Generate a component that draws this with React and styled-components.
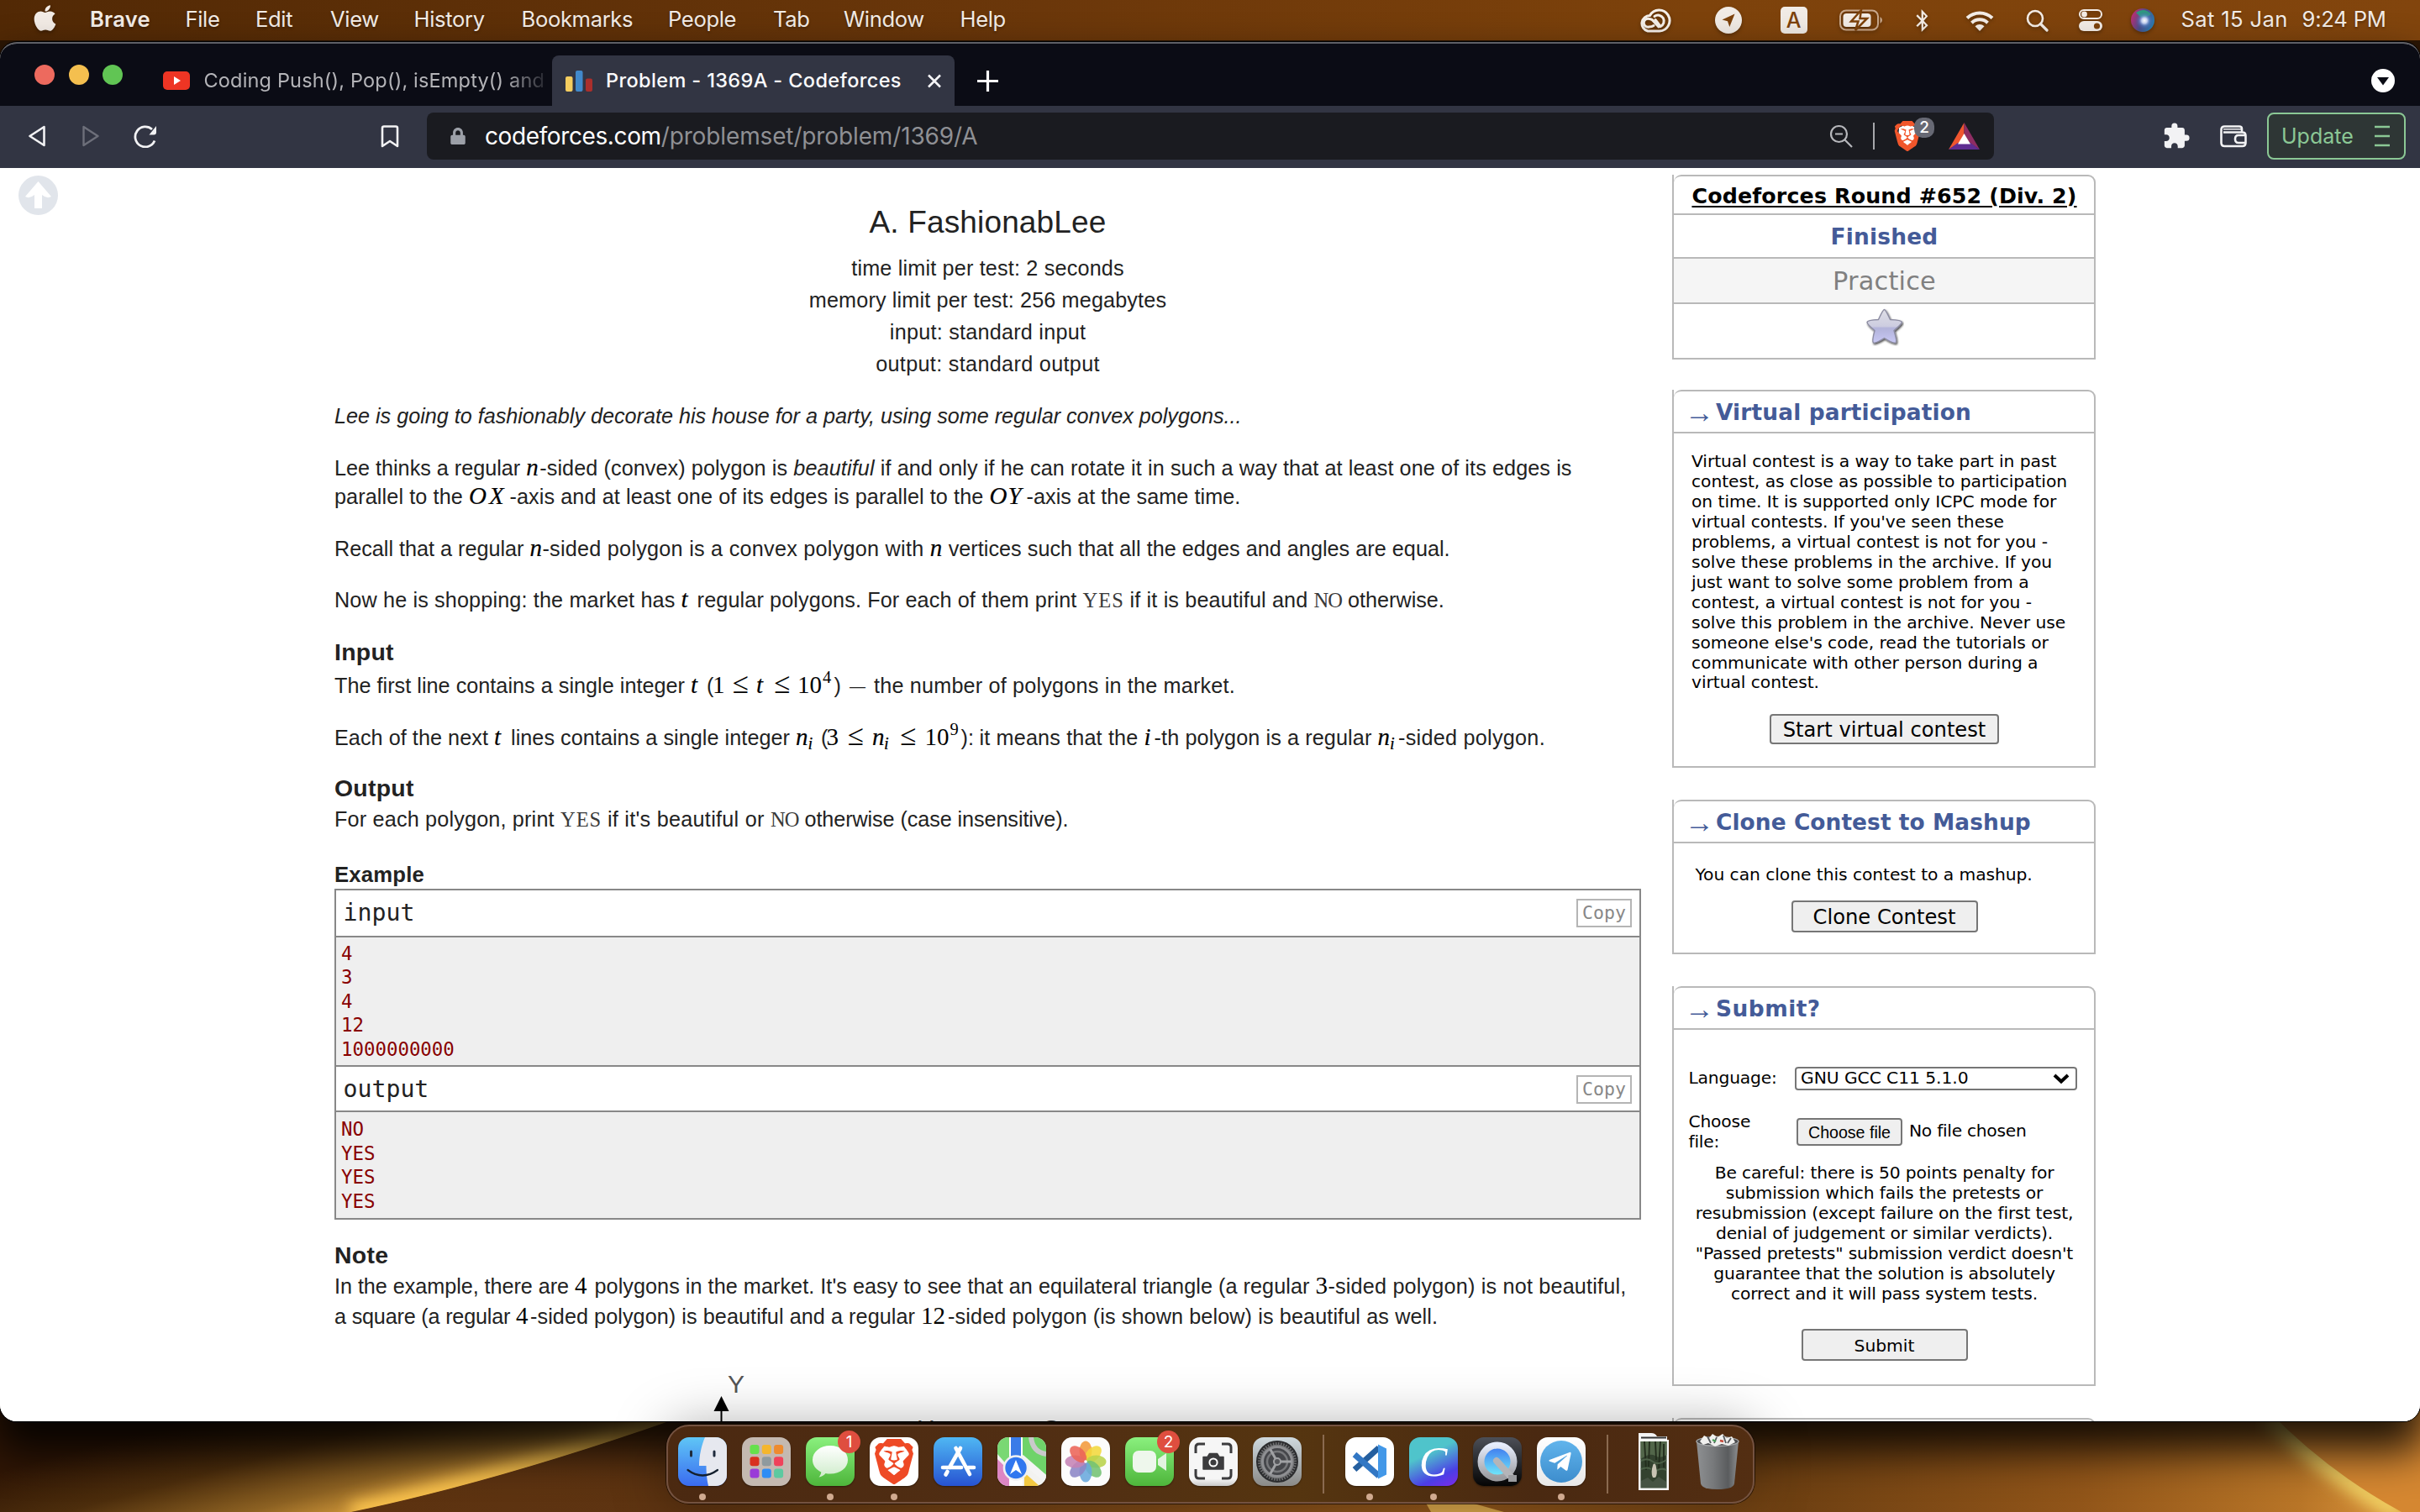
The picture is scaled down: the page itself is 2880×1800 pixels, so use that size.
import React from "react";
import styled, { createGlobalStyle, css } from "styled-components";
import { FaApple, FaTelegramPlane, FaBluetoothB, FaLock } from "react-icons/fa";
import { MdExtension } from "react-icons/md";
import { SiBrave } from "react-icons/si";

const SANS = `"Liberation Sans", Arial, sans-serif`;
const SERIF = `"Liberation Serif", "Times New Roman", serif`;
const VERDANA = `"DejaVu Sans", Verdana, sans-serif`;
const MONO = `"DejaVu Sans Mono", monospace`;
const UI = `Inter, sans-serif`;
const LINE = "#b9b9b9";
const BLUE = "#445b98";

const GlobalStyle = createGlobalStyle`
  * { box-sizing: border-box; }
  html, body { margin: 0; padding: 0; background: #1b0d03; }
  svg { display: block; flex: none; }
`;

/* ---------- desktop ---------- */

const Desktop = styled.div`
  position: relative;
  width: 2880px;
  height: 1800px;
  overflow: hidden;
  background: #2c1604;
`;

const WallpaperLayer = styled.svg`
  position: absolute;
  left: 0;
  bottom: 0;
`;

const MenuBar = styled.header`
  position: relative;
  display: flex;
  align-items: center;
  height: 48px;
  color: #f3ece6;
  background: linear-gradient(90deg, #522905 0%, #6b370a 43%, #7d420b 70%, #82450d 100%);
  font: 400 25.6px/45px ${UI};
  svg { filter: drop-shadow(0 2px 2px rgba(0, 0, 0, 0.3)); }
`;

const AppleSlot = styled.div`
  width: 107px;
  padding: 0 0 5px 36px;
`;

const MenuItem = styled.span`
  width: ${(p) => p.$w}px;
  padding-bottom: 3px;
  letter-spacing: ${(p) => p.$ls ?? -0.35}px;
  font-weight: ${(p) => (p.$strong ? 600 : 400)};
  text-shadow: 0 2px 3px rgba(0, 0, 0, 0.3);
  white-space: pre;
`;

const StatusItem = styled.span`
  display: flex;
  flex: none;
  align-items: center;
  justify-content: center;
  width: ${(p) => p.$w}px;
  margin-left: ${(p) => p.$gap}px;
`;

const Clock = styled(MenuItem)`
  margin-left: ${(p) => p.$gap}px;
`;

const InputBadge = styled.span`
  width: 32px;
  height: 32px;
  border-radius: 5px;
  background: #f1ebe5;
  color: #7d420b;
  text-align: center;
  font: 500 25px/32px ${UI};
`;

/* ---------- browser window ---------- */

const BrowserWindow = styled.main`
  position: relative;
  display: flex;
  flex-direction: column;
  height: 1642px;
  margin-top: 2px;
  border-top: 2px solid #5e5f66;
  border-radius: 20px;
  overflow: hidden;
  background: #fff;
`;

const WindowShade = styled.div`
  position: relative;
  border-radius: 20px;
  box-shadow: 0 0 0 1px #000, 0 30px 50px 6px rgba(0, 0, 0, 0.85);
`;

const TabStrip = styled.div`
  display: flex;
  align-items: center;
  height: 74px;
  padding: 0 30px 0 41px;
  background: #0b0c15;
`;

const Lights = styled.div`
  display: flex;
  gap: 16.5px;
  width: 137px;
`;

const Light = styled.i`
  width: 24px;
  height: 24px;
  border-radius: 50%;
  background: ${(p) => p.$c};
`;

const Tab = styled.div`
  display: flex;
  align-items: center;
  align-self: flex-end;
  gap: 16.5px;
  width: ${(p) => p.$w}px;
  height: 60px;
  padding-left: 16px;
  border-radius: 8px 8px 0 0;
  color: ${(p) => (p.$active ? "#fbfbfd" : "#b4b4b8")};
  background: ${(p) => (p.$active ? "#323543" : "transparent")};
  font: ${(p) => (p.$active ? 500 : 400)} 23.5px/60px ${UI};
`;

const TabTitle = styled.span`
  width: ${(p) => p.$w}px;
  overflow: hidden;
  white-space: nowrap;
  letter-spacing: ${(p) => p.$ls}px;
  ${(p) => p.$fade && css`mask-image: linear-gradient(90deg, #000 88%, transparent 102%);`}
`;

const StripIcon = styled.span`
  display: flex;
  align-self: flex-end;
  align-items: center;
  height: 60px;
  margin-left: ${(p) => p.$gap};
`;

const Toolbar = styled.div`
  display: flex;
  align-items: center;
  height: 74px;
  padding-bottom: 2px;
  background: #323543;
`;

const Tool = styled.span`
  display: flex;
  width: ${(p) => p.$w}px;
  margin-left: ${(p) => p.$gap}px;
  color: ${(p) => p.$c || "#f2f2f4"};
`;

const AddressBar = styled.div`
  display: flex;
  align-items: center;
  width: 1865px;
  height: 56px;
  margin-left: 33px;
  padding: 0 17px 0 27px;
  border-radius: 8px;
  background: #1a1b20;
  color: #9ca0a8;
  font: 400 28px/56px ${UI};
`;

const Host = styled.span`
  margin-left: 22px;
  color: #fff;
  letter-spacing: -0.39px;
`;

const Path = styled.span`
  flex: 1;
  color: #8f9094;
  letter-spacing: -0.13px;
`;

const BarRule = styled.i`
  width: 2px;
  height: 32px;
  margin: 0 23px 0 24px;
  background: #a6a7ab;
`;

const Shield = styled.span`
  position: relative;
  width: 65px;
  color: #f1562b;
`;

const LionMark = styled(SiBrave)`
  margin: -36px 0 0 -2px;
`;

const ShieldCount = styled.b`
  position: absolute;
  left: 24px;
  top: -4px;
  width: 24px;
  height: 24px;
  border-radius: 10px;
  background: #676974;
  color: #fff;
  text-align: center;
  font: 500 19px/24px ${UI};
`;

const UpdateButton = styled.button`
  display: flex;
  align-items: center;
  justify-content: space-between;
  width: 165px;
  height: 56px;
  margin-left: 24px;
  padding: 0 17px 0 15px;
  border: 2px solid #8bc895;
  border-radius: 8px;
  background: #2e3635;
  color: #8bc895;
  font: 400 25px/50px ${UI};
`;

/* ---------- page ---------- */

const Page = styled.div`
  display: flex;
  align-items: flex-start;
  flex: 1;
  overflow: hidden;
  background: #fff;
`;

const Gutter = styled.div`
  width: 398px;
  padding: 9px 0 0 22px;
`;

const Article = styled.article`
  width: 1555px;
  margin-right: 37px;
  padding-top: 45px;
  color: #222;
  font: 400 25.2px/34px ${SANS};
`;

const Title = styled.h1`
  margin: 0 0 15px;
  text-align: center;
  font: 400 37px/40px ${SANS};
  letter-spacing: 0.15px;
`;

const Limit = styled.div`
  text-align: center;
  line-height: 38px;
  letter-spacing: ${(p) => p.$ls}px;
`;

const Line = styled.div`
  height: 34px;
  margin-top: ${(p) => p.$gap || 0}px;
  white-space: pre;
`;

const T = styled.span`
  letter-spacing: ${(p) => p.$ls || 0}px;
  font-style: ${(p) => (p.$it ? "italic" : "normal")};
`;

const Cell = styled.span`
  display: inline-block;
  width: ${(p) => p.$w}px;
  line-height: 0;
`;

const Dash = styled(Cell)`
  font-size: 19px;
  vertical-align: 2px;
`;

const M = styled(Cell)`
  color: #000;
  font-family: ${SERIF};
  font-size: ${(p) => p.$size || 29}px;
  font-style: ${(p) => (p.$up ? "normal" : "italic")};
  letter-spacing: ${(p) => p.$ls || 0}px;
  text-align: ${(p) => (p.$mid ? "center" : "left")};
  vertical-align: ${(p) => p.$lift || 0}px;
  -webkit-text-stroke: ${(p) => (p.$up ? 0 : 0.2)}px #000;
`;

const TT = styled(Cell)`
  color: #3a3a3a;
  font-family: ${SERIF};
  font-size: 24.5px;
  letter-spacing: ${(p) => p.$ls || 0}px;
`;

const Heading = styled.h2`
  margin: ${(p) => p.$gap}px 0 ${(p) => p.$after || 0}px;
  font: 700 28.4px/40px ${SANS};
  letter-spacing: 0.28px;
`;

const SubHeading = styled.h3`
  margin: 32px 0 0;
  font: 700 25.7px/34px ${SANS};
  letter-spacing: 0.19px;
`;

const Samples = styled.section`
  border: 2px solid #888;
`;

const SampleHead = styled.div`
  display: flex;
  align-items: center;
  justify-content: space-between;
  height: ${(p) => p.$h}px;
  padding: ${(p) => (p.$second ? 1 : 0)}px 9px 0 8.5px;
  border-bottom: 2px solid #888;
  border-top: ${(p) => (p.$second ? "2px solid #888" : "0")};
  font: 400 28.2px/40px ${MONO};
`;

const CopyButton = styled.button`
  width: 66px;
  height: 34px;
  padding: 0;
  border: 2px solid #b5b5b5;
  background: #fff;
  color: #888;
  font: 400 21.5px/28px ${MONO};
`;

const Pre = styled.pre`
  height: ${(p) => p.$h}px;
  margin: 0;
  padding: ${(p) => p.$top}px 0 0 6px;
  background: #efefef;
  color: #880000;
  font: 400 22.4px/28.5px ${MONO};
`;

const Figure = styled.svg`
  margin-top: 36px;
`;

/* ---------- sidebar ---------- */

const Sidebar = styled.aside`
  display: flex;
  flex-direction: column;
  gap: 38px;
  width: 504px;
  padding-top: 8px;
  color: #000;
  font: 400 20.3px/23.95px ${VERDANA};
  letter-spacing: -0.07px;
`;

const Card = styled.section`
  display: flex;
  flex: none;
  flex-direction: column;
  height: ${(p) => p.$h}px;
  margin-bottom: ${(p) => p.$pull || 0}px;
  border-left: 2px solid ${LINE};
  border-bottom: 2px solid ${LINE};
`;

const CardHead = styled.header`
  display: flex;
  align-items: center;
  height: 52px;
  padding: 2px 0 0 15px;
  border: 2px solid ${LINE};
  border-left: 0;
  border-radius: 9px 9px 0 0;
  color: ${BLUE};
  font: 700 26.4px/44px ${VERDANA};
  letter-spacing: ${(p) => p.$ls ?? 0.2}px;
`;

const Arrow = styled.span`
  width: 36px;
  margin-left: -2px;
  margin-right: 1px;
  font: 400 35px/40px ${SANS};
`;

const CardBody = styled.div`
  flex: 1;
  padding: ${(p) => p.$pad};
  border-right: 2px solid ${LINE};
`;

const RoundName = styled(CardHead)`
  justify-content: center;
  height: 48px;
  padding: 3px 0 0 1px;
  color: #000;
  font-size: 25.3px;
  letter-spacing: 0.14px;
  text-decoration: underline;
  text-decoration-thickness: 2px;
  text-underline-offset: 3px;
`;

const RoundRow = styled.div`
  display: flex;
  align-items: center;
  justify-content: center;
  height: ${(p) => p.$h}px;
  padding: 2px 0 0 1px;
  border-right: 2px solid ${LINE};
  border-bottom: 2px solid ${LINE};
  background: ${(p) => (p.$shaded ? "#f5f5f5" : "#fff")};
  color: ${(p) => (p.$shaded ? "#808080" : BLUE)};
  font: ${(p) => (p.$shaded ? "400 30.4px" : "700 26.4px")} / 40px ${VERDANA};
  letter-spacing: 0.2px;
`;

const StarRow = styled(CardBody)`
  display: flex;
  justify-content: center;
`;

const Text = styled.p`
  margin: 0;
  white-space: pre;
  text-align: ${(p) => (p.$center ? "center" : "left")};
  letter-spacing: ${(p) => (p.$center ? "-0.15px" : "inherit")};
`;

const FullWidth = styled.div`
  margin-left: -${(p) => p.$inset}px;
  padding-left: 1px;
`;

const Button = styled.button`
  display: block;
  width: ${(p) => p.$w}px;
  height: ${(p) => p.$h}px;
  margin: ${(p) => p.$gap}px auto 0;
  padding: 2px 0 0;
  border: 2px solid #767676;
  border-radius: 4px;
  background: #efefef;
  color: #000;
  font: 400 ${(p) => p.$size || 24.2}px/30px ${VERDANA};
`;

const FormRow = styled.div`
  display: flex;
  align-items: center;
  height: ${(p) => p.$h}px;
  margin-bottom: ${(p) => p.$after}px;
`;

const Label = styled.label`
  width: ${(p) => p.$w}px;
  letter-spacing: -0.2px;
`;

const Hint = styled.span`
  padding-bottom: 2px;
  letter-spacing: -0.3px;
`;

const SelectBox = styled.div`
  display: flex;
  align-items: center;
  justify-content: space-between;
  width: 336px;
  height: 28px;
  padding: 0 7px 0 5px;
  border: 2px solid #767676;
  border-radius: 4px;
`;

const FileButton = styled.button`
  width: 126px;
  height: 33px;
  margin-right: 8px;
  padding: 0;
  border: 2px solid #767676;
  border-radius: 4px;
  background: #efefef;
  color: #000;
  font: 400 19.6px/28px ${SANS};
`;

/* ---------- dock ---------- */

const DockBar = styled.nav`
  position: absolute;
  left: 793px;
  top: 1696px;
  display: flex;
  gap: 18px;
  width: 1295px;
  height: 94px;
  padding: 13px 0 0 12px;
  border: 2px solid #745240;
  border-radius: 27px;
  background: linear-gradient(90deg, #4b2911 0%, #512e13 35%, #553510 58%, #4a2911 80%, #532e12 100%);
  box-shadow: 0 0 0 1px rgba(20, 8, 0, 0.7), 0 2px 64px rgba(0, 0, 0, 0.34);
`;

const DockItem = styled.div`
  position: relative;
  display: flex;
  flex-direction: column;
  align-items: center;
  width: 58px;
`;

const TallItem = styled(DockItem)`
  margin-top: ${(p) => p.$lift}px;
`;

const Tile = styled.div`
  display: flex;
  align-items: center;
  justify-content: center;
  flex: none;
  width: 58px;
  height: 58px;
  overflow: hidden;
  border-radius: 13px;
  background: ${(p) => p.$bg};
  box-shadow: 0 1px 2px rgba(0, 0, 0, 0.4);
`;

const RunningDot = styled.i`
  width: 8px;
  height: 8px;
  margin-top: 9px;
  border-radius: 50%;
  background: #d0aa90;
`;

const Badge = styled.b`
  position: absolute;
  right: -7px;
  top: -8px;
  width: 27px;
  height: 27px;
  border-radius: 50%;
  background: #df4e3f;
  color: #fff;
  text-align: center;
  font: 400 19px/27px ${UI};
`;

const DockRule = styled.i`
  flex: none;
  width: 2px;
  height: 70px;
  margin: -3px 7px 0;
  background: #8a6a50;
`;

const petals = ["#f39a3b", "#f3d83c", "#b9d34b", "#73c173", "#69a9dd", "#8c86c6", "#c583b5", "#ec6458"];
const pads = ["#66e04c", "#f5b62d", "#ee8b2f", "#d9301f", "#8f9a9e", "#f0425a", "#9a3cd8", "#2f8df5", "#5cc9a0"];

function Wallpaper() {
  return (
    <WallpaperLayer width="2880" height="120" viewBox="0 1680 2880 120">
      <defs>
        <linearGradient id="base" x1="0" x2="1">
          <stop offset="0" stopColor="#5a300f" />
          <stop offset=".28" stopColor="#5e3411" />
          <stop offset=".6" stopColor="#94581b" />
          <stop offset=".74" stopColor="#6e4012" />
          <stop offset=".86" stopColor="#915519" />
          <stop offset=".95" stopColor="#b87527" />
          <stop offset="1" stopColor="#e09a40" />
        </linearGradient>
        <linearGradient id="left" gradientUnits="userSpaceOnUse" x1="590" y1="1762" x2="545" y2="1600">
          <stop offset="0" stopColor="#d79d3c" />
          <stop offset=".25" stopColor="#8c6122" />
          <stop offset=".6" stopColor="#4c2d0c" />
          <stop offset="1" stopColor="#301605" />
        </linearGradient>
        <filter id="soft" x="-10%" y="-50%" width="120%" height="200%">
          <feGaussianBlur stdDeviation="9" />
        </filter>
        <clipPath id="dune"><path d="M0 1680H830Q600 1762 418 1800H0Z" /></clipPath>
        <clipPath id="slope"><path d="M2400 1680H2700Q2770 1752 2858 1800H2400Z" /></clipPath>
      </defs>
      <rect y="1680" width="2880" height="120" fill="url(#base)" />
      <g clipPath="url(#dune)">
        <path d="M0 1680H830Q600 1762 418 1800H0Z" fill="url(#left)" />
        <path d="M830 1680Q600 1762 418 1800" fill="none" stroke="#ffc850" strokeWidth="20" filter="url(#soft)" />
      </g>
      <path d="M2700 1680Q2770 1752 2858 1800H2880V1680Z" fill="#d58731" />
      <g clipPath="url(#slope)">
        <path d="M2700 1680Q2770 1752 2858 1800" fill="none" stroke="#f0cf62" strokeWidth="26" filter="url(#soft)" />
      </g>
      <path d="M1695 1786L1703 1800H1790L1740 1786Z" fill="#d9a64a" />
    </WallpaperLayer>
  );
}

const CreativeCloud = () => (
  <svg width="40" height="29" viewBox="0 0 40 29" fill="none" stroke="#f6f0ea" strokeWidth="3">
    <path d="M12 27H26A12.500 12.500 0 1 0 14.500 8.500A9.400 9.400 0 0 0 12 27Z" />
    <path d="M19 20.500Q17 22 13.500 22A5 5 0 1 1 14 12.500Q17 12.500 19.500 16L25 22" strokeLinecap="round" />
    <path d="M20 9.500A7 7 0 1 1 27 21.500L21 13.500" strokeLinecap="round" />
  </svg>
);

const Battery = () => (
  <svg width="51" height="26" viewBox="0 0 51 26">
    <rect x="1" y="1.500" width="45" height="23" rx="7" fill="none" stroke="#c9a88c" strokeWidth="2" />
    <path d="M48.500 9v8q2.500-1.500 2.500-4t-2.500-4" fill="#c9a88c" />
    <rect x="4.500" y="5" width="33" height="16" rx="4" fill="#f3ece6" />
    <path d="M26 1L14 14.500h8.500L19 25 33 11h-8.500z" fill="#f3ece6" stroke="#7d420b" strokeWidth="2.500" />
  </svg>
);

const Wifi = () => (
  <svg width="34" height="25" viewBox="0 0 34 25" fill="none" stroke="#f3ece6" strokeWidth="4">
    <path d="M2 9.500A21.500 21.500 0 0 1 32 9.500" />
    <path d="M7.500 15.200A13.600 13.600 0 0 1 26.500 15.200" />
    <path d="M17 25l-5.500-5.700a8 8 0 0 1 11 0z" fill="#f3ece6" stroke="none" />
  </svg>
);

const Magnifier = () => (
  <svg width="27" height="27" viewBox="0 0 27 27" fill="none" stroke="#f3ece6" strokeLinecap="round">
    <circle cx="11" cy="11" r="9" strokeWidth="2.600" />
    <path d="M17.500 17.500L25 25" strokeWidth="3.200" />
  </svg>
);

const ControlCentre = () => (
  <svg width="28" height="26" viewBox="0 0 28 26">
    <rect x="1" y="1" width="26" height="10" rx="5" fill="none" stroke="#f3ece6" strokeWidth="2" />
    <circle cx="6.500" cy="6" r="3.400" fill="#f3ece6" />
    <rect y="14" width="28" height="12" rx="6" fill="#f3ece6" />
    <circle cx="21.500" cy="20" r="3.600" fill="#7d420b" />
  </svg>
);

const Siri = () => (
  <svg width="28" height="28" viewBox="0 0 28 28">
    <defs>
      <radialGradient id="siri" cx=".58" cy=".52" r=".42">
        <stop offset="0" stopColor="#fff" />
        <stop offset=".3" stopColor="#c5d2f2" />
        <stop offset=".6" stopColor="#5f86d0" stopOpacity=".5" />
        <stop offset="1" stopColor="#4a55a0" stopOpacity="0" />
      </radialGradient>
      <linearGradient id="siriRim" x1="0" y1=".3" x2="1" y2=".7">
        <stop offset="0" stopColor="#c22c72" />
        <stop offset=".5" stopColor="#4a4f8c" />
        <stop offset="1" stopColor="#2682b4" />
      </linearGradient>
    </defs>
    <circle cx="14" cy="14" r="14" fill="url(#siriRim)" />
    <path d="M6 5Q16-2 24 7Q18 12 12 11Z" fill="#2d9a80" />
    <circle cx="14" cy="14" r="13" fill="url(#siri)" />
  </svg>
);

const menus = [["File", 83.5], ["Edit", 89], ["View", 99.5], ["History", 128], ["Bookmarks", 174.5], ["People", 125], ["Tab", 84], ["Window", 138.5], ["Help", 60]];

function TopBar() {
  return (
    <MenuBar>
      <AppleSlot><FaApple size={35} /></AppleSlot>
      <MenuItem $w={113.5} $strong $ls={0.2}>Brave</MenuItem>
      {menus.map(([label, w]) => <MenuItem key={label} $w={w}>{label}</MenuItem>)}
      <StatusItem $w={40} $gap={746}><CreativeCloud /></StatusItem>
      <StatusItem $w={32} $gap={52}>
        <svg width="32" height="32" viewBox="0 0 32 32">
          <circle cx="16" cy="16" r="16" fill="#f1ebe5" />
          <path d="M23.500 8.500L8.500 15.500l6.500 1.800 2.300 6.700z" fill="#7d420b" />
        </svg>
      </StatusItem>
      <StatusItem $w={32} $gap={46}><InputBadge>A</InputBadge></StatusItem>
      <StatusItem $w={51} $gap={38}><Battery /></StatusItem>
      <StatusItem $w={18} $gap={39}><FaBluetoothB size={27} /></StatusItem>
      <StatusItem $w={34} $gap={42}><Wifi /></StatusItem>
      <StatusItem $w={27} $gap={38}><Magnifier /></StatusItem>
      <StatusItem $w={28} $gap={36}><ControlCentre /></StatusItem>
      <StatusItem $w={28} $gap={34}><Siri /></StatusItem>
      <Clock $w={144} $gap={32} $ls={0.35}>Sat 15 Jan</Clock>
      <MenuItem $w={105} $ls={-0.2}>9:24 PM</MenuItem>
    </MenuBar>
  );
}

function Chrome() {
  return (
    <>
      <TabStrip>
        <Lights><Light $c="#ed6a5e" /><Light $c="#f4bf4f" /><Light $c="#61c554" /></Lights>
        <Tab $w={478.500}>
          <svg width="32" height="22" viewBox="0 0 32 22">
            <rect width="32" height="22" rx="5" fill="#ee3524" />
            <path d="M13 6l8 5-8 5z" fill="#fff" />
          </svg>
          <TabTitle $w={406} $ls={0.17} $fade>Coding Push(), Pop(), isEmpty() and</TabTitle>
        </Tab>
        <Tab $w={479} $active>
          <svg width="32" height="25" viewBox="0 0 32 25">
            <rect y="7" width="8.500" height="18" rx="2" fill="#f5cd5f" />
            <rect x="12" width="8.500" height="25" rx="2" fill="#4189cb" />
            <rect x="24" y="9.500" width="8" height="15.500" rx="2" fill="#ab2f2c" />
          </svg>
          <TabTitle $w={365} $ls={0.37}>Problem - 1369A - Codeforces</TabTitle>
          <svg width="18" height="17" viewBox="0 0 18 17" stroke="#f4f4f6" strokeWidth="2.600"><path d="M2 1.500l14 14M16 1.500l-14 14" /></svg>
        </Tab>
        <StripIcon $gap="27px">
          <svg width="25" height="25" viewBox="0 0 25 25" stroke="#fff" strokeWidth="3.200"><path d="M12.500 0v25M0 12.500h25" /></svg>
        </StripIcon>
        <StripIcon $gap="auto">
          <svg width="28" height="28" viewBox="0 0 28 28"><circle cx="14" cy="14" r="14" fill="#fff" /><path d="M7 10h14l-7 9.500z" fill="#0b0c15" /></svg>
        </StripIcon>
      </TabStrip>
      <Toolbar>
        <Tool $w={20} $gap={34}>
          <svg width="20" height="26" viewBox="0 0 20 26" fill="none" stroke="currentColor" strokeWidth="2.600" strokeLinejoin="round"><path d="M18.500 2v22L1.500 13z" /></svg>
        </Tool>
        <Tool $w={20} $gap={44} $c="#6d6f7a">
          <svg width="20" height="26" viewBox="0 0 20 26" fill="none" stroke="currentColor" strokeWidth="2.400" strokeLinejoin="round"><path d="M1.500 2v22L18.500 13z" /></svg>
        </Tool>
        <Tool $w={28} $gap={41}>
          <svg width="28" height="27" viewBox="0 0 28 27" fill="none" stroke="currentColor" strokeWidth="2.800">
            <path d="M25 18.500A12 12 0 1 1 22 5" />
            <path d="M27 1v7.500a3 3 0 0 1-3 3h-5.500z" fill="currentColor" stroke="none" />
          </svg>
        </Tool>
        <Tool $w={22} $gap={266}>
          <svg width="22" height="27" viewBox="0 0 22 27" fill="none" stroke="currentColor" strokeWidth="2.600" strokeLinejoin="round"><path d="M2 3.500q0-2 2-2h14q2 0 2 2V25l-9-6-9 6z" /></svg>
        </Tool>
        <AddressBar>
          <FaLock size={20} />
          <Host>codeforces.com</Host>
          <Path>/problemset/problem/1369/A</Path>
          <svg width="28" height="28" viewBox="0 0 28 28" fill="none" stroke="#b6b7bb" strokeWidth="2.200"><circle cx="11.500" cy="11.500" r="9.500" /><path d="M18.500 18.500L27 27M7 11.500h9" /></svg>
          <BarRule />
          <Shield>
            <svg width="32" height="36" viewBox="0 0 32 36"><path d="M6 8L12 5h8l6 3 1 14-11 11L5 22z" fill="#fff" /></svg>
            <LionMark size={36} />
            <ShieldCount>2</ShieldCount>
          </Shield>
          <svg width="37" height="32" viewBox="0 0 37 32"><path d="M18.500 0L0 32l18.500-12z" fill="#f0562f" /><path d="M18.500 0L37 32 18.500 20z" fill="#8e2d63" /><path d="M0 32h37L26 24H11z" fill="#5f2d91" /><path d="M18.500 13l7.500 12.500H11z" fill="#fff" /></svg>
        </AddressBar>
        <Tool $w={34} $gap={200}><MdExtension size={34} /></Tool>
        <Tool $w={32} $gap={35}>
          <svg width="32" height="27" viewBox="0 0 32 27" fill="none" stroke="currentColor" strokeWidth="2.600">
            <path d="M26 8V4.500q0-3-3-3H5.500q-4 0-4 4V21q0 4 4 4h21q4 0 4-4v-8.500q0-4-4-4H4" />
            <path d="M31 12h-9q-4 0-4 4.500t4 4.500h9" />
            <path d="M4 4.800h22" strokeWidth="1.600" />
          </svg>
        </Tool>
        <UpdateButton>
          Update
          <svg width="18" height="26" viewBox="0 0 18 26" stroke="currentColor" strokeWidth="2.600"><path d="M0 2h18M0 13h18M0 24h18" /></svg>
        </UpdateButton>
      </Toolbar>
    </>
  );
}

function Problem() {
  return (
    <Article>
      <Title>A. FashionabLee</Title>
      <Limit $ls={0.18}>time limit per test: 2 seconds</Limit>
      <Limit $ls={0.15}>memory limit per test: 256 megabytes</Limit>
      <Limit $ls={0.24}>input: standard input</Limit>
      <Limit $ls={0.33}>output: standard output</Limit>

      <Line $gap={26}><T $it $ls={-0.01}>Lee is going to fashionably decorate his house for a party, using some regular convex polygons...</T></Line>
      <Line $gap={28}>
        <T>Lee thinks a regular </T><M $w={16}>n</M><T $ls={0.09}>-sided (convex) polygon is </T><T $it $ls={0.127}>beautiful </T>
        <T $ls={0.1}>if and only if he can rotate it in such a way that at least one of its edges is</T>
      </Line>
      <Line>
        <T $ls={0.11}>parallel to the </T><M $w={48.5} $ls={3}>OX</M><T $ls={0.097}>-axis and at least one of its edges is parallel to the </T>
        <M $w={44} $ls={1}>OY</M><T $ls={0.07}>-axis at the same time.</T>
      </Line>
      <Line $gap={28}>
        <T>Recall that a regular </T><M $w={15}>n</M><T $ls={0.26}>-sided polygon is a convex polygon with </T><M $w={22}>n</M>
        <T $ls={0.035}>vertices such that all the edges and angles are equal.</T>
      </Line>
      <Line $gap={27}>
        <T $ls={0.148}>Now he is shopping: the market has </T><M $w={19}>t</M><T $ls={0.13}>regular polygons. For each of them print </T><TT $w={56} $ls={1}>YES</TT>
        <T $ls={0.147}>if it is beautiful and </T><TT $w={40.5} $ls={-1}>NO</TT><T>otherwise.</T>
      </Line>

      <Heading $gap={25} $after={3}>Input</Heading>
      <Line>
        <T $ls={0.03}>The first line contains a single integer </T><M $w={19}>t</M><Cell $w={7}>(</Cell><M $up $w={14}>1</M><M $up $mid $size={35} $w={38}>≤</M>
        <M $w={12}>t</M><M $up $mid $size={35} $w={37}>≤</M><M $up $w={30}>10</M><M $up $w={13.5} $size={20.5} $lift={12}>4</M><Cell $w={18.5}>)</Cell><Dash $w={29}>—</Dash>
        <T $ls={0.19}>the number of polygons in the market.</T>
      </Line>
      <Line $gap={28}>
        <T $ls={0.057}>Each of the next </T><M $w={20}>t</M><T $ls={0.05}>lines contains a single integer </T><M $w={14.5}>n</M><M $w={15.5} $size={20.5} $lift={-5}>i</M>
        <Cell $w={6.5}>(</Cell><M $up $w={14.5}>3</M><M $up $mid $size={35} $w={40}>≤</M><M $w={14}>n</M><M $w={8.5} $size={20.5} $lift={-5}>i</M>
        <M $up $mid $size={35} $w={40}>≤</M><M $up $w={30}>10</M><M $up $w={13} $size={20.5} $lift={12}>9</M><Cell $w={22}>):</Cell>
        <T $ls={0.155}>it means that the </T><M $w={12}>i</M><T $ls={0.11}>-th polygon is a regular </T><M $w={14.5}>n</M><M $w={10} $size={20.5} $lift={-5}>i</M><T $ls={0.27}>-sided polygon.</T>
      </Line>

      <Heading $gap={23}>Output</Heading>
      <Line>
        <T $ls={0.18}>For each polygon, print </T><TT $w={56} $ls={1}>YES</TT><T $ls={0.276}>if it's beautiful or </T><TT $w={40.5} $ls={-1}>NO</TT><T $ls={-0.08}>otherwise (case insensitive).</T>
      </Line>

      <SubHeading>Example</SubHeading>
      <Samples>
        <SampleHead $h={56}>input<CopyButton>Copy</CopyButton></SampleHead>
        <Pre $h={152} $top={4.5}>{"4\n3\n4\n12\n1000000000"}</Pre>
        <SampleHead $h={56} $second>output<CopyButton>Copy</CopyButton></SampleHead>
        <Pre $h={126} $top={6}>{"NO\nYES\nYES\nYES"}</Pre>
      </Samples>

      <Heading $gap={22}>Note</Heading>
      <Line>
        <T $ls={-0.04}>In the example, there are </T><M $up $w={23.5}>4</M><T $ls={0.058}>polygons in the market. It's easy to see that an equilateral triangle (a regular </T>
        <M $up $w={15}>3</M><T $ls={0.19}>-sided polygon) is not beautiful,</T>
      </Line>
      <Line $gap={2}>
        <T $ls={-0.19}>a square (a regular </T><M $up $w={17}>4</M><T $ls={0.07}>-sided polygon) is beautiful and a regular </T><M $up $w={32}>12</M>
        <T $ls={0.117}>-sided polygon (is shown below) is beautiful as well.</T>
      </Line>
      <Figure width="1000" height="120" viewBox="398 1620 1000 120">
        <path d="M858.500 1662l9 18h-18z" fill="#000" />
        <path d="M858.500 1678v60" stroke="#000" strokeWidth="2" />
        <g fill="#555" fontFamily="Liberation Sans, sans-serif" fontSize="30">
          <text x="866" y="1658">Y</text>
          <text x="1091" y="1711">H</text>
          <text x="1239" y="1711">G</text>
        </g>
      </Figure>
    </Article>
  );
}

const Star = () => (
  <svg width="46" height="46" viewBox="0 0 46 46">
    <defs>
      <linearGradient id="star" x1="0" y1="0" x2="0" y2="1">
        <stop offset="0" stopColor="#dedee6" /><stop offset=".5" stopColor="#cdcde0" /><stop offset=".56" stopColor="#b2b3da" /><stop offset="1" stopColor="#c8c8f4" />
      </linearGradient>
      <filter id="drop"><feDropShadow dx="1" dy="1.500" stdDeviation="1.200" floodOpacity=".75" /></filter>
    </defs>
    <path d="M22.500 2.500Q24 2.500 29.500 14.500Q43 15 43.500 17.500Q43 20 34 27.500Q38 41 36 42Q33 43 22.500 36.500Q12 43 9.500 42Q7.500 40.500 11 27.500Q2 20 2 17.500Q2.500 15 15.500 14.500Q21 2.500 22.500 2.500Z" fill="url(#star)" stroke="#8c8ca2" strokeWidth="1.400" strokeLinejoin="round" filter="url(#drop)" />
  </svg>
);

function SidePanel() {
  return (
    <Sidebar>
      <Card $h={220} $pull={-2}>
        <RoundName as="div">Codeforces Round #652 (Div. 2)</RoundName>
        <RoundRow $h={52}>Finished</RoundRow>
        <RoundRow $h={54} $shaded>Practice</RoundRow>
        <StarRow $pad="4px 0 0 2px"><Star /></StarRow>
      </Card>
      <Card $h={450}>
        <CardHead $ls={0.15}><Arrow>→</Arrow>Virtual participation</CardHead>
        <CardBody $pad="22px 0 0 21px">
          <Text>{`Virtual contest is a way to take part in past
contest, as close as possible to participation
on time. It is supported only ICPC mode for
virtual contests. If you've seen these
problems, a virtual contest is not for you -
solve these problems in the archive. If you
just want to solve some problem from a
contest, a virtual contest is not for you -
solve this problem in the archive. Never use
someone else's code, read the tutorials or
communicate with other person during a
virtual contest.`}</Text>
          <FullWidth $inset={21}><Button $w={273} $h={36} $gap={25}>Start virtual contest</Button></FullWidth>
        </CardBody>
      </Card>
      <Card $h={184}>
        <CardHead $ls={0.08}><Arrow>→</Arrow>Clone Contest to Mashup</CardHead>
        <CardBody $pad="26px 0 0 25.5px">
          <Text $center={false}>You can clone this contest to a mashup.</Text>
          <FullWidth $inset={25.5}><Button $w={222} $h={38} $gap={18}>Clone Contest</Button></FullWidth>
        </CardBody>
      </Card>
      <Card $h={476}>
        <CardHead $ls={0.5}><Arrow>→</Arrow>Submit?</CardHead>
        <CardBody $pad="44px 0 0 17.5px">
          <FormRow $h={28} $after={26}>
            <Label $w={126.5}>Language:</Label>
            <SelectBox>
              GNU GCC C11 5.1.0
              <svg width="20" height="14" viewBox="0 0 20 14" fill="none" stroke="#000" strokeWidth="4"><path d="M2 3l8 7.500L18 3" /></svg>
            </SelectBox>
          </FormRow>
          <FormRow $h={47} $after={14}>
            <Label $w={128.5}>Choose<br />file:</Label>
            <FileButton>Choose file</FileButton>
            <Hint>No file chosen</Hint>
          </FormRow>
          <FullWidth $inset={17.5}>
            <Text $center>{`Be careful: there is 50 points penalty for
submission which fails the pretests or
resubmission (except failure on the first test,
denial of judgement or similar verdicts).
"Passed pretests" submission verdict doesn't
guarantee that the solution is absolutely
correct and it will pass system tests.`}</Text>
            <Button $w={198} $h={38} $gap={29} $size={20.3}>Submit</Button>
          </FullWidth>
        </CardBody>
      </Card>
      <Card $h={100}><CardHead /><CardBody /></Card>
    </Sidebar>
  );
}

const Art = (p) => <svg width="58" height="58" viewBox="0 0 58 58" fill="none" {...p} />;

const dock = [
  { id: "finder", run: true, bg: "linear-gradient(#5fc6f6, #3a6bf0)", art: (
    <Art>
      <path d="M32 0C28 9 25 22 25 34h8.500c0 10 1 17 2.500 24h22V0z" fill="#e6e8ef" />
      <path d="M15.500 17v5M43 17v5" stroke="#1f2b3c" strokeWidth="3" strokeLinecap="round" />
      <path d="M11.500 39Q29 52 47 39" stroke="#14202e" strokeWidth="2.200" strokeLinecap="round" />
    </Art>) },
  { id: "launchpad", bg: "#c4b9b1", art: (
    <Art>{pads.map((c, i) => <rect key={c} x={9.5 + (i % 3) * 14.3} y={9 + Math.floor(i / 3) * 14.3} width="11" height="11" rx="3" fill={c} />)}</Art>) },
  { id: "messages", run: true, badge: "1", bg: "linear-gradient(#8af07e, #4eb63b)", art: (
    <Art>
      <defs><linearGradient id="bub" x1="0" y1="0" x2="0" y2="1"><stop offset="0" stopColor="#fff" /><stop offset="1" stopColor="#cfeccb" /></linearGradient></defs>
      <path d="M29 10c12 0 21 7.500 21 17s-9 16.500-21 16.500c-2 0-4-.2-5.500-.6-2 2.500-5 4.200-8 4.600 1.500-1.600 2.500-3.500 2.800-6C12 38.500 8 33 8 27c0-9.500 9-17 21-17z" fill="url(#bub)" />
    </Art>) },
  { id: "brave", run: true, bg: "#fff", art: <SiBrave size={54} color="#ee4a26" /> },
  { id: "appstore", bg: "linear-gradient(#4fb7f3, #2753d2)", art: (
    <Art stroke="#fff" strokeWidth="4.600" strokeLinecap="round"><path d="M32 13L19 36M16.500 41L14.500 44.500M26.500 13L43 44M11 36h22M41 36h7" /></Art>) },
  { id: "maps", bg: "#f2f2f0", art: (
    <Art>
      <path d="M0 0h14v36L0 20z" fill="#79d873" /><path d="M30 0h28v46L30 22z" fill="#6fd36a" />
      <path d="M0 26l14 14v18H0z" fill="#dd86c4" /><path d="M32 58V42l18 16z" fill="#f3c944" />
      <path d="M14 0h16v58H14z" fill="#fff" /><path d="M16 0h12v30H16z" fill="#3a7be8" />
      <path d="M40 0q2 18 18 20" stroke="#c9c9cb" strokeWidth="6" />
      <path d="M28 24L58 50" stroke="#f4f4f4" strokeWidth="8" />
      <circle cx="22" cy="36.500" r="14" fill="#3177ef" stroke="#f0f0f2" strokeWidth="2.600" />
      <path d="M22 27l7 17-7-5-7 5z" fill="#fff" />
    </Art>) },
  { id: "photos", bg: "#fcfcfc", art: (
    <Art>{petals.map((c, i) => <ellipse key={c} cx="29" cy="16.500" rx="7.500" ry="12" fill={c} opacity=".88" transform={`rotate(${i * 45} 29 29)`} />)}<circle cx="29" cy="29" r="1.800" fill="#fff" /></Art>) },
  { id: "facetime", badge: "2", bg: "linear-gradient(#8af07e, #4eb63b)", art: (
    <Art><rect x="9" y="16" width="28" height="26" rx="7" fill="#eef7ec" /><path d="M39 26l10-7v21l-10-7z" fill="#e3f3df" /></Art>) },
  { id: "screenshot", bg: "linear-gradient(#f6f6f6 85%, #c9c9c9)", art: (
    <Art stroke="#3c3c3e" strokeWidth="3">
      <path d="M8 19v-7q0-4 4-4h7M39 8h7q4 0 4 4v7M50 38v7q0 4-4 4h-7M19 49h-7q-4 0-4-4v-7" />
      <path d="M17 23.500h5l2.500-4h9l2.500 4h5V38H17z" fill="#3c3c3e" strokeLinejoin="round" strokeWidth="1.500" />
      <circle cx="29" cy="30" r="4.600" stroke="#fff" strokeWidth="2" />
    </Art>) },
  { id: "settings", bg: "linear-gradient(#cfd9de, #8a8a88)", art: (
    <Art stroke="#2c2d2f">
      <circle cx="29" cy="29" r="24" fill="#6f7072" strokeWidth="2" /><circle cx="29" cy="29" r="22" strokeWidth="3.500" strokeDasharray="1.600 1.600" />
      <circle cx="29" cy="29" r="17.500" fill="#45464a" stroke="#8e8f92" strokeWidth="3" />
      <circle cx="29" cy="29" r="12" stroke="#77787b" strokeWidth="2.500" />
      <path d="M29 29h17M29 29l-8.500-15M29 29l-8.500 15" stroke="#a0a1a4" strokeWidth="3" /><circle cx="29" cy="29" r="4" fill="#55565a" stroke="#a0a1a4" strokeWidth="2" />
    </Art>) },
  { rule: true, id: "r1" },
  { id: "vscode", run: true, bg: "#fff", art: (
    <Art>
      <path d="M11 38.500L40 12.500" stroke="#255f9f" strokeWidth="7" /><path d="M11 20.500L40 46" stroke="#3277c4" strokeWidth="7" />
      <path d="M39 8.500l10 5v31l-10 5z" fill="#4398e8" strokeLinejoin="round" />
    </Art>) },
  { id: "canva", run: true, bg: "linear-gradient(155deg, #4fc4cb 35%, #4b3ee6 75%, #7d2ae8)", art: (
    <Art><text x="12" y="46" fontFamily="Liberation Serif, serif" fontStyle="italic" fontSize="50" fill="#fff">C</text></Art>) },
  { id: "quicktime", bg: "linear-gradient(#4c4f57, #050505)", art: (
    <Art>
      <defs><linearGradient id="qt" x1="0" y1="0" x2="0" y2="1"><stop offset="0" stopColor="#3d74ee" /><stop offset="1" stopColor="#74f2fb" /></linearGradient>
        <linearGradient id="qr" x1="0" y1="0" x2="0" y2="1"><stop offset="0" stopColor="#e6ecfb" /><stop offset="1" stopColor="#9b9ca0" /></linearGradient></defs>
      <circle cx="29" cy="29" r="19.500" fill="url(#qt)" stroke="url(#qr)" strokeWidth="8" />
      <path d="M28 28L46 48" stroke="#b4b5b9" strokeWidth="8" strokeLinecap="round" /><path d="M42 45h10v8h-10z" fill="#9b9ca0" />
    </Art>) },
  { id: "telegram", run: true, bg: "linear-gradient(#fff, #e8e8e8)", art: (
    <Art>
      <defs><linearGradient id="tg" x1="0" y1="0" x2="0" y2="1"><stop offset="0" stopColor="#61b4ec" /><stop offset="1" stopColor="#3d8dcd" /></linearGradient></defs>
      <circle cx="29" cy="29" r="25" fill="url(#tg)" /><g transform="translate(12.500 14)"><FaTelegramPlane size={30} color="#fff" /></g>
    </Art>) },
  { rule: true, id: "r2" },
];

const Stack = () => (
  <svg width="38" height="70" viewBox="0 0 38 70">
    <path d="M1 1h15q5 0 7 4h12v4H1z" fill="#f4f4f4" /><rect x="1" y="9" width="36" height="60" fill="#fafafa" />
    <path d="M4 6.500h30" stroke="#333" strokeWidth="2" />
    <rect x="3.500" y="11" width="31" height="55.500" fill="#33422f" />
    <path d="M3.500 11h31v16q-8 5-14 1t-17 4z" fill="#52664a" />
    <path d="M8 11l2 34M14 11l-1 30M21 11l1 22M27 11l-2 34M31 14v28" stroke="#222c1c" strokeWidth="1.800" />
    <path d="M4 34q8-4 14 1t16-2M4 44q7-3 12 0M22 46q6-4 12-1" stroke="#4d6148" strokeWidth="2" fill="none" />
    <path d="M18.500 38q3-2 3.500 4 2 8-1 12h-3q-3-6 .5-16z" fill="#c9c4b4" /><path d="M4 58l8-4 6 5 7-6 9 6v7H4z" fill="#465343" />
  </svg>
);

const Trash = () => (
  <svg width="52" height="68" viewBox="0 0 52 68">
    <defs><linearGradient id="bin"><stop offset="0" stopColor="#8e9092" /><stop offset=".4" stopColor="#77797b" /><stop offset=".75" stopColor="#5a5c5e" /><stop offset="1" stopColor="#8d8f91" /></linearGradient></defs>
    <path d="M1 10h50l-5 50q-1 7-20 7T6 60z" fill="url(#bin)" />
    <ellipse cx="26" cy="10" rx="25" ry="5.500" fill="#4b4c4e" stroke="#a3a5a7" strokeWidth="1.500" />
    <path d="M5 10l5-7 6 3 4-5 6 4 6-4 5 5 6-2 4 7-8 4-8-2-8 3-8-4-6 2z" fill="#f0f0ee" />
    <path d="M14 4l4 8M25 5l-3 7M33 3l3 9M42 6l-4 6" stroke="#55585c" strokeWidth="1.800" /><path d="M20 8l4 2" stroke="#4aa05a" strokeWidth="2.500" /><path d="M29 9l4 1" stroke="#c64b3b" strokeWidth="2.500" />
  </svg>
);

function Dock() {
  return (
    <DockBar>
      {dock.map((d) => d.rule ? <DockRule key={d.id} /> : (
        <DockItem key={d.id}>
          <Tile $bg={d.bg}>{d.art}</Tile>
          {d.badge && <Badge>{d.badge}</Badge>}
          {d.run && <RunningDot />}
        </DockItem>
      ))}
      <TallItem $lift={-6}><Stack /></TallItem>
      <TallItem $lift={-5}><Trash /></TallItem>
    </DockBar>
  );
}

export default function App() {
  return (
    <Desktop>
      <GlobalStyle />
      <Wallpaper />
      <TopBar />
      <WindowShade>
        <BrowserWindow>
          <Chrome />
          <Page>
            <Gutter>
              <svg width="47" height="47" viewBox="0 0 47 47"><circle cx="23.500" cy="23.500" r="23.500" fill="#e1e5eb" /><path d="M23.500 7L39 25q-5 3-11-2v16h-9V23q-6 5-11 2z" fill="#fff" /></svg>
            </Gutter>
            <Problem />
            <SidePanel />
          </Page>
        </BrowserWindow>
      </WindowShade>
      <Dock />
    </Desktop>
  );
}
